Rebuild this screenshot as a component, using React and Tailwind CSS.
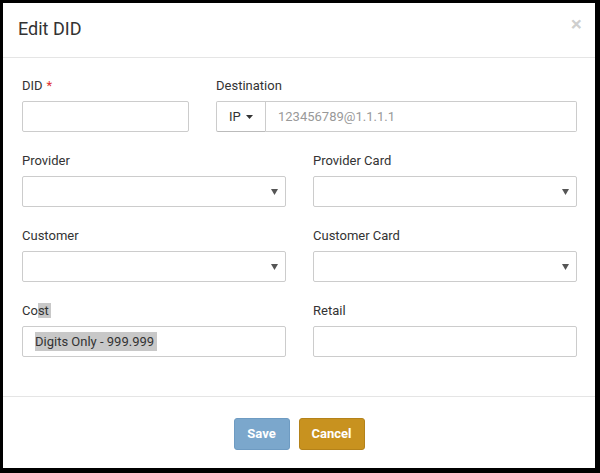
import React from "react";

const font = { fontFamily: "Roboto, 'Liberation Sans', Arial, sans-serif" };

function Arrow() {
  return (
    <svg width="7" height="6" viewBox="0 0 7 6" className="shrink-0">
      <path d="M0 0 L7 0 L3.5 6 Z" fill="#555" />
    </svg>
  );
}

function Field({ label, required, children, className = "" }) {
  return (
    <div className={className}>
      <div className="h-[18px] mb-[6px] text-[13px] leading-[18px] text-[#333]">
        {label}
        {required && <span className="text-[#e0312f] ml-[4px]">*</span>}
      </div>
      {children}
    </div>
  );
}

function TextBox({ children }) {
  return (
    <div className="h-[31px] border border-[#ccc] rounded-[2px] bg-white flex items-center px-[12px] text-[13px] text-[#333]">
      {children}
    </div>
  );
}

function SelectBox() {
  return (
    <div className="h-[31px] border border-[#ccc] rounded-[2px] bg-white flex items-center justify-end pr-[7px]">
      <Arrow />
    </div>
  );
}

export default function App() {
  return (
    <div className="w-[600px] h-[473px] bg-black pt-[3px] pl-[3px]" style={font}>
      <div className="w-[592px] h-[465px] bg-white flex flex-col">
        {/* header */}
        <div className="h-[55px] border-b border-[#e5e5e5] flex items-center justify-between pl-[15px] pr-[13px]">
          <h4 className="text-[18px] text-[#333] leading-none mt-[-2px]">Edit DID</h4>
          <span className="text-[21px] font-bold text-black/20 leading-none mt-[-12px]">×</span>
        </div>

        {/* body */}
        <div className="pt-[19px] pl-[19px] pr-[18px] pb-[39px] flex flex-col gap-[20px]">
          <div className="grid grid-cols-3 gap-x-[27px]">
            <Field label="DID" required>
              <TextBox />
            </Field>
            <Field label="Destination" className="col-span-2">
              <div className="h-[31px] flex">
                <div className="w-[50px] border border-[#ccc] border-b-[#bbb] rounded-l-[2px] flex items-center pl-[12px] gap-[5px] text-[13px] text-[#333]">
                  IP
                  <svg width="7" height="4" viewBox="0 0 7 4">
                    <path d="M0 0 L7 0 L3.5 4 Z" fill="#333" />
                  </svg>
                </div>
                <div className="flex-1 border border-l-0 border-[#ccc] rounded-r-[2px] flex items-center pl-[12px] text-[13px] text-[#999]">
                  123456789@1.1.1.1
                </div>
              </div>
            </Field>
          </div>

          <div className="grid grid-cols-2 gap-x-[27px]">
            <Field label="Provider">
              <SelectBox />
            </Field>
            <Field label="Provider Card">
              <SelectBox />
            </Field>
          </div>

          <div className="grid grid-cols-2 gap-x-[27px]">
            <Field label="Customer">
              <SelectBox />
            </Field>
            <Field label="Customer Card">
              <SelectBox />
            </Field>
          </div>

          <div className="grid grid-cols-2 gap-x-[27px]">
            <Field
              label={
                <>
                  Co<span className="bg-[#c8c8c8] pr-[2px]">st</span>
                </>
              }
            >
              <TextBox>
                <span className="bg-[#c8c8c8] pr-[3px]">Digits Only - 999.999</span>
              </TextBox>
            </Field>
            <Field label="Retail">
              <TextBox />
            </Field>
          </div>
        </div>

        {/* footer */}
        <div className="border-t border-[#e5e5e5] flex justify-center gap-[9px] pt-[21px]">
          <button className="w-[56px] h-[32px] rounded-[3px] bg-[#7ba7cc] border border-[#6e9bc2] text-white text-[13px] font-bold">
            Save
          </button>
          <button className="w-[66px] h-[32px] rounded-[3px] bg-[#c8921f] border border-[#b4821a] text-white text-[13px] font-bold">
            Cancel
          </button>
        </div>
      </div>
    </div>
  );
}
